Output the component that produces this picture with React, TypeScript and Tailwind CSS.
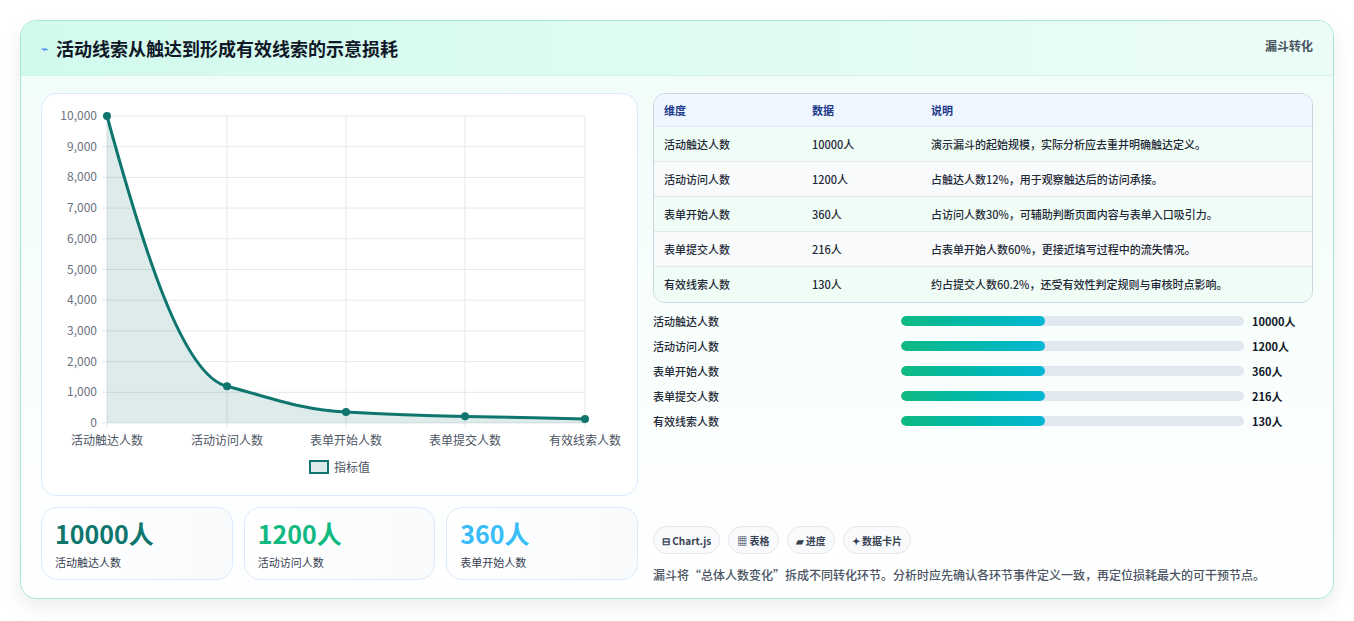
const font = { fontFamily: '"Noto Sans CJK SC", "Noto Sans", sans-serif' };

const rows = [
  ['活动触达人数', '10000人', '演示漏斗的起始规模，实际分析应去重并明确触达定义。'],
  ['活动访问人数', '1200人', '占触达人数12%，用于观察触达后的访问承接。'],
  ['表单开始人数', '360人', '占访问人数30%，可辅助判断页面内容与表单入口吸引力。'],
  ['表单提交人数', '216人', '占表单开始人数60%，更接近填写过程中的流失情况。'],
  ['有效线索人数', '130人', '约占提交人数60.2%，还受有效性判定规则与审核时点影响。'],
];

const Chart = () => {
  const xs = [65, 185, 304, 423, 543];
  const vals = [10000, 1200, 360, 216, 130];
  const y = (v: number) => 329 - (v / 10000) * 307;
  const line =
    'M65,22 C100,150 140,282 185,292.2 C230,304 260,316 304,318 C350,320.5 380,321.5 423,322.4 C470,323.3 500,324 543,325';
  return (
    <svg width="597" height="403" className="block">
      {Array.from({ length: 11 }).map((_, i) => {
        const yy = 22 + i * 30.7;
        return (
          <g key={i}>
            <line x1="60" x2="543" y1={yy} y2={yy} stroke="#e5e7eb" />
            <text x="55" y={yy + 4} textAnchor="end" fontSize="12" fill="#6b7280" style={font}>
              {(10000 - i * 1000).toLocaleString('en-US')}
            </text>
          </g>
        );
      })}
      {xs.map((x) => (
        <line key={x} x1={x} x2={x} y1="22" y2="334" stroke="#e5e7eb" />
      ))}
      <path d={line + ' L543,329 L65,329 Z'} fill="#0f766e" fillOpacity="0.14" />
      <path d={line} fill="none" stroke="#0f766e" strokeWidth="3" />
      {xs.map((x, i) => (
        <circle key={x} cx={x} cy={y(vals[i])} r="4" fill="#0f766e" />
      ))}
      {rows.map((r, i) => (
        <text key={i} x={xs[i]} y="351" textAnchor="middle" fontSize="12" fill="#4b5563" style={font}>
          {r[0]}
        </text>
      ))}
      <rect x="268" y="367" width="18" height="12" fill="#0f766e" fillOpacity="0.14" stroke="#0f766e" strokeWidth="2" />
      <text x="292" y="378" fontSize="12" fill="#4b5563" style={font}>指标值</text>
    </svg>
  );
};

export default function App() {
  return (
    <div className="min-h-[621px] bg-white pt-5 px-5" style={font}>
      <div className="w-[1314px] h-[579px] rounded-2xl border border-[#a7e8dc] bg-gradient-to-b from-[#f0fdf8] to-white shadow-[0_8px_20px_rgba(0,0,0,0.08)] overflow-hidden flex flex-col">
        <div className="h-[55px] flex items-center justify-between px-5 bg-gradient-to-r from-[#d1faed] to-[#ecfdf7] border-b border-[#d5f3ec]">
          <div className="flex items-center gap-2">
            <span className="text-[12px] text-[#3b82f6]">⌁</span>
            <span className="text-[18px] font-bold text-[#111827]">活动线索从触达到形成有效线索的示意损耗</span>
          </div>
          <span className="text-[12px] font-semibold text-[#4b5563] self-start mt-4">漏斗转化</span>
        </div>
        <div className="flex gap-[15px] px-5 pt-[17px]">
          <div className="w-[597px] flex flex-col gap-[11px]">
            <div className="h-[403px] bg-white rounded-2xl border border-[#dbeafe]">
              <Chart />
            </div>
            <div className="grid grid-cols-3 gap-[11px]">
              {[
                ['10000人', '活动触达人数', 'text-[#0f766e]'],
                ['1200人', '活动访问人数', 'text-[#10b981]'],
                ['360人', '表单开始人数', 'text-[#38bdf8]'],
              ].map(([v, l, c]) => (
                <div key={l} className="h-[73px] rounded-2xl border border-[#dbeafe] bg-gradient-to-r from-white to-[#f8fafc] px-[13px] pt-2">
                  <div className={`text-[25px] font-bold leading-[34px] ${c}`}>{v}</div>
                  <div className="text-[11px] text-[#374151] mt-[4px]">{l}</div>
                </div>
              ))}
            </div>
          </div>
          <div className="w-[662px] flex flex-col">
            <div className="rounded-xl border border-[#cbd5e1] overflow-hidden text-[11px] text-[#1f2937]">
              <div className="h-[33px] flex items-center bg-[#eff6ff] font-semibold text-[#1e3a8a] border-b border-[#dbeafe]">
                <span className="w-[158px] pl-[10px]">维度</span>
                <span className="w-[119px]">数据</span>
                <span>说明</span>
              </div>
              {rows.map((r, i) => (
                <div key={i} className={`h-[35px] flex items-center font-medium ${i % 2 ? 'bg-[#f8fafc]' : 'bg-[#f0fdf6]'} ${i < 4 ? 'border-b border-[#e5e7eb]' : ''}`}>
                  <span className="w-[158px] pl-[10px]">{r[0]}</span>
                  <span className="w-[119px]">{r[1]}</span>
                  <span>{r[2]}</span>
                </div>
              ))}
            </div>
            <div className="flex flex-col gap-[9px] mt-[10px]">
              {rows.map((r) => (
                <div key={r[0]} className="h-[16px] flex items-center text-[11px] font-medium text-[#1f2937]">
                  <span className="w-[248px]">{r[0]}</span>
                  <div className="w-[343px] h-[10px] rounded-full bg-[#e2e8f0] overflow-hidden">
                    <div className="h-full w-[42%] rounded-full bg-gradient-to-r from-[#10b981] to-[#06b6d4]" />
                  </div>
                  <span className="ml-2 font-bold text-[#111827]">{r[1]}</span>
                </div>
              ))}
            </div>
            <div className="flex gap-[8px] mt-[97px]">
              {['⊟ Chart.js', '▦ 表格', '▰ 进度', '✦ 数据卡片'].map((t) => (
                <span key={t} className="h-[28px] px-[8px] flex items-center rounded-full border border-[#e5e7eb] bg-[#f8fafc] text-[10px] font-semibold text-[#374151]">
                  {t}
                </span>
              ))}
            </div>
            <p className="mt-[12px] text-[12px] text-[#4b5563] font-medium">
              漏斗将“总体人数变化”拆成不同转化环节。分析时应先确认各环节事件定义一致，再定位损耗最大的可干预节点。
            </p>
          </div>
        </div>
      </div>
    </div>
  );
}
